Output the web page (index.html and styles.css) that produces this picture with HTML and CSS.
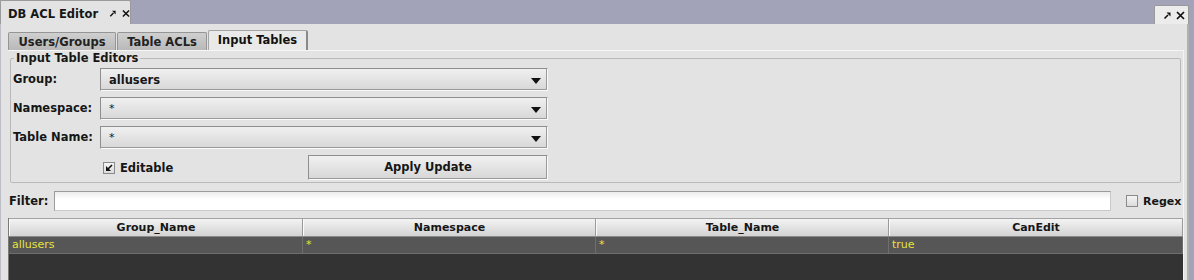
FILE: index.html
```html
<!DOCTYPE html>
<html lang="en">
<head>
    <meta charset="UTF-8">
    <title>DB ACL Editor</title>
    <link rel="stylesheet" href="styles.css">
</head>
<body>
    <div class="dock-tabs">
        <div class="dock-tab active">
            <span class="dock-title">DB ACL Editor</span>
            <svg class="ico" width="9" height="9" viewBox="0 0 9 9"><path d="M1.5 7.5 L5 4" stroke="#111" stroke-width="1.6"/><path d="M3.5 1.5 L7.5 1.5 L7.5 5.5 Z" fill="#111"/></svg>
            <svg class="ico" width="9" height="9" viewBox="0 0 9 9"><path d="M1 1 L8 8 M8 1 L1 8" stroke="#111" stroke-width="1.7"/></svg>
        </div>
        <div class="dock-tab side">
            <svg class="ico" width="9" height="9" viewBox="0 0 9 9"><path d="M1.5 7.5 L5 4" stroke="#111" stroke-width="1.6"/><path d="M3.5 1.5 L7.5 1.5 L7.5 5.5 Z" fill="#111"/></svg>
            <svg class="ico" width="9" height="9" viewBox="0 0 9 9"><path d="M1 1 L8 8 M8 1 L1 8" stroke="#111" stroke-width="1.7"/></svg>
        </div>
    </div>

    <div class="frame">
        <div class="tabs">
            <div class="tab">Users/Groups</div>
            <div class="tab">Table ACLs</div>
            <div class="tab selected">Input Tables</div>
        </div>

        <div class="tab-body">
            <fieldset class="editors">
                <legend>Input Table Editors</legend>
                <div class="form">
                    <label>Group:</label>
                    <div class="combo bold">allusers<span class="arrow"></span></div>

                    <label>Namespace:</label>
                    <div class="combo">*<span class="arrow"></span></div>

                    <label>Table Name:</label>
                    <div class="combo">*<span class="arrow"></span></div>

                    <span></span>
                    <div class="actions">
                        <div class="check-label">
                            <span class="check"><svg width="10" height="10" viewBox="0 0 10 10"><path d="M2 3 L2 8 L7 8 Z" fill="#111"/><path d="M3 7 L8 2" stroke="#111" stroke-width="1.6"/></svg></span>
                            Editable
                        </div>
                        <div class="button">Apply Update</div>
                    </div>
                </div>
            </fieldset>

            <div class="filter-row">
                <label>Filter:</label>
                <div class="filter-input"></div>
                <div class="check-label regex"><span class="check"></span>Regex</div>
            </div>

            <div class="grid">
                <div class="grid-head">
                    <div>Group_Name</div>
                    <div>Namespace</div>
                    <div>Table_Name</div>
                    <div>CanEdit</div>
                </div>
                <div class="grid-row">
                    <div>allusers</div>
                    <div>*</div>
                    <div>*</div>
                    <div>true</div>
                </div>
            </div>
        </div>
    </div>
</body>
</html>
```

FILE: styles.css
```css
:root {
    --panel: #e3e3e3;
    --edge: #8e8e8e;
    --text: #161616;
}

body {
    margin: 0;
    height: 280px;
    overflow: hidden;
    background-color: #a2a2b9;
    font-family: 'DejaVu Sans', sans-serif;
    font-size: 11px;
    color: var(--text);
    white-space: nowrap;
}

.dock-tabs {
    display: flex;
    justify-content: space-between;
    align-items: flex-end;
    height: 24px;
    width: 1189px;
}

.dock-tab {
    display: flex;
    align-items: center;
    gap: 5px;
    box-sizing: border-box;
    background-color: #e6e6e6;
    border: 1px solid #9a9a9a;
    border-bottom: none;
    border-radius: 2px 2px 0 0;
}

.dock-tab.active {
    width: 131px;
    height: 24px;
    padding: 2px 0 0 7px;
    background-color: var(--panel);
}

.dock-tab.side {
    width: 35px;
    height: 19px;
    padding: 0 0 0 8px;
    gap: 4px;
    background-color: #ececec;
}

.dock-title {
    font-weight: bold;
    font-size: 11.5px;
    margin-right: 6px;
}

.ico {
    display: block;
}

.frame {
    display: flex;
    flex-direction: column;
    box-sizing: border-box;
    width: 1189px;
    height: 256px;
    background-color: var(--panel);
    border-left: 1px solid #bdbdc8;
    border-right: 2px solid #b0b0b0;
    padding: 6px 3px 0 7px;
}

.tabs {
    display: flex;
    align-items: flex-end;
    height: 20px;
}

.tab {
    box-sizing: border-box;
    height: 18px;
    padding: 2px 0 0;
    margin-right: 1px;
    background: linear-gradient(#cfcfcf, #b9b9b9);
    border: 1px solid #959595;
    border-bottom: none;
    border-radius: 2px 2px 0 0;
    font-weight: bold;
    font-size: 11.5px;
    line-height: 15px;
    color: #222;
    text-align: center;
}

.tab:nth-child(1) { width: 108px; }
.tab:nth-child(2) { width: 90px; }

.tab.selected {
    width: 100px;
    height: 20px;
    padding-top: 2px;
    background: #e9e9e9;
    border-color: #a5a5a5;
    border-right: 2px solid #8a8a8a;
    color: #111;
}

.tab-body {
    flex: 1;
    display: flex;
    flex-direction: column;
    border-top: 1px solid #f6f6f6;
    border-right: 1px solid #f4f4f4;
    padding-top: 2px;
}

.editors {
    margin: 0 2px;
    padding: 0 0 4px 2px;
    border: 1px solid #b9b9b9;
    border-radius: 2px;
}

.editors legend {
    padding: 0 2px;
    margin-left: 1px;
    font-weight: bold;
    font-size: 11.5px;
    line-height: 11px;
}

.form {
    display: grid;
    grid-template-columns: 87px 448px;
    grid-auto-rows: 23px;
    row-gap: 6px;
    padding-top: 4px;
}

.form label {
    font-weight: bold;
    font-size: 11.5px;
    line-height: 23px;
}

.combo {
    position: relative;
    box-sizing: border-box;
    height: 23px;
    padding: 0 8px;
    line-height: 22px;
    background: linear-gradient(#f0f0f0, #d7d7d7);
    border: 1px solid var(--edge);
    border-right-color: #fafafa;
    border-bottom-color: #fafafa;
    box-shadow: inset -1px -1px 0 #9a9a9a;
}

.combo.bold {
    font-weight: bold;
    font-size: 11.5px;
}

.arrow {
    position: absolute;
    right: 6px;
    top: 9px;
    width: 0;
    height: 0;
    border-left: 5px solid transparent;
    border-right: 5px solid transparent;
    border-top: 6px solid #111;
}

.actions {
    display: flex;
    align-items: center;
    justify-content: space-between;
    height: 25px;
}

.check-label {
    display: flex;
    align-items: center;
    gap: 5px;
    font-weight: bold;
    font-size: 11.5px;
    padding-left: 3px;
}

.check {
    box-sizing: border-box;
    width: 12px;
    height: 12px;
    background: linear-gradient(#f4f4f4, #dcdcdc);
    border: 1px solid #8a8a8a;
    flex-shrink: 0;
}

.check svg {
    display: block;
}

.button {
    box-sizing: border-box;
    width: 240px;
    height: 25px;
    line-height: 23px;
    text-align: center;
    font-weight: bold;
    font-size: 11.5px;
    background: linear-gradient(#f1f1f1, #d6d6d6);
    border: 1px solid var(--edge);
    border-right-color: #fbfbfb;
    border-bottom-color: #fbfbfb;
    box-shadow: inset -1px -1px 0 #9a9a9a;
}

.filter-row {
    display: flex;
    align-items: center;
    height: 20px;
    margin-top: 8px;
}

.filter-row label {
    flex-shrink: 0;
    font-weight: bold;
    font-size: 11.5px;
    width: 45px;
    padding-left: 1px;
}

.filter-input {
    flex-shrink: 0;
    box-sizing: border-box;
    width: 1057px;
    height: 20px;
    background: linear-gradient(#ececec, #ffffff 40%);
    border: 1px solid #9b9b9b;
    border-right-color: #c9c9c9;
    border-bottom-color: #c9c9c9;
}

.check-label.regex {
    margin-left: 12px;
    gap: 5px;
    font-size: 11px;
}

.grid {
    flex: 1;
    margin-top: 7px;
    width: 1174px;
    background-color: #333333;
    border-left: 1px solid #7a7a7a;
}

.grid-head,
.grid-row {
    display: grid;
    grid-template-columns: 294px 293px 293px 294px;
}

.grid-head {
    height: 19px;
    background: linear-gradient(#f3f3f3, #d3d3d3);
    border-top: 1px solid #a3a3a3;
    border-bottom: 1px solid #8a8a8a;
    box-sizing: border-box;
    font-weight: bold;
    text-align: center;
    line-height: 17px;
}

.grid-head div {
    border-right: 1px solid #9a9a9a;
    border-left: 1px solid #fafafa;
}

.grid-row {
    height: 16px;
    background-color: #565656;
    border-bottom: 1px solid #6e6e6e;
    color: #e6e23e;
    line-height: 15px;
}

.grid-row div {
    padding-left: 3px;
    border-right: 1px solid #6e6e6e;
}
```
